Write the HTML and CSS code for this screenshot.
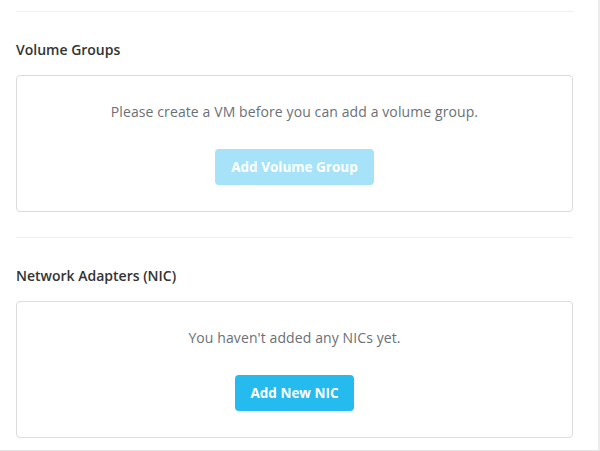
FILE: index.html
```html
<!DOCTYPE html>
<html>
<head>
<meta charset="utf-8">
<link rel="stylesheet" href="styles.css">
</head>
<body>
<div class="page">
  <section class="section">
    <h3 class="section-title">Volume Groups</h3>
    <div class="card">
      <p class="card-text">Please create a VM before you can add a volume group.</p>
      <button class="btn btn-disabled">Add Volume Group</button>
    </div>
  </section>
  <section class="section">
    <h3 class="section-title">Network Adapters (NIC)</h3>
    <div class="card">
      <p class="card-text">You haven't added any NICs yet.</p>
      <button class="btn btn-primary">Add New NIC</button>
    </div>
  </section>
</div>
</body>
</html>
```
FILE: styles.css
```css
html, body {
  margin: 0;
  padding: 0;
  background: #fff;
}
body {
  font-family: "Open Sans", sans-serif;
}
.page {
  box-sizing: border-box;
  width: 600px;
  height: 451px;
  padding: 11px 25px 0 16px;
  border-right: 2px solid #ececec;
  border-bottom: 1px solid #e2e2e2;
  overflow: hidden;
}
.section {
  border-top: 1px solid #eeeeee;
  padding-top: 29px;
  margin-bottom: 25px;
}
.section-title {
  margin: 0 0 16px;
  font-size: 14px;
  line-height: 18px;
  font-weight: 600;
  color: #333;
}
.card {
  border: 1px solid #dcdcdc;
  border-radius: 4px;
  padding: 27px 16px 26px;
  display: flex;
  flex-direction: column;
  align-items: center;
}
.card-text {
  margin: 0 0 28px;
  font-size: 14px;
  line-height: 18px;
  letter-spacing: 0.1px;
  color: #6b7076;
}
.btn {
  height: 36px;
  padding: 0 16px;
  border: 0;
  border-radius: 4px;
  font-family: inherit;
  font-size: 13.5px;
  font-weight: 700;
  color: #fff;
}
.btn-disabled {
  background: #a7e3f8;
}
.btn-primary {
  background: #26bbee;
}
```
